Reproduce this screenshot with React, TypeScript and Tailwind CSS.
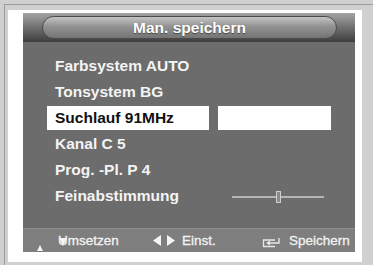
import React from "react";

const items = ["Farbsystem AUTO", "Tonsystem BG"];

export default function App() {
  const font = { fontFamily: '"Liberation Sans", Arial, sans-serif' };
  return (
    <div className="w-[373px] h-[265px] bg-[#d0d0d0] pt-[4px] pl-[4px] overflow-hidden" style={font}>
      <div className="h-full border-l border-t border-[#9c9c9c] pl-[3px] pt-[5px]">
        <div className="w-[354px] h-[252px] bg-white pl-[15px] pt-[3px]">
          <div className="w-[332px] h-[239px] bg-[#6c6c6c] flex flex-col">
            {/* header */}
            <div className="h-[29px] flex items-center pl-[19px] pr-[18px] bg-[linear-gradient(to_bottom,#a4a4a4_0%,#6a6a6a_55%,#3e3e3e_100%)]">
              <div className="flex-1 h-[23px] rounded-full border border-[#4a4a4a] bg-[linear-gradient(to_bottom,#c4c4c4_0%,#929292_45%,#747474_100%)] flex items-center justify-center">
                <span className="text-[15.5px] font-bold text-white leading-none [text-shadow:0_1px_1px_#444]">Man. speichern</span>
              </div>
            </div>
            {/* body */}
            <div className="flex-1 pt-[11px] flex flex-col">
              {items.map((t) => (
                <div key={t} className="h-[26px] flex items-center pl-[32px] text-[15.5px] font-bold text-[#f4f4f4]">
                  {t}
                </div>
              ))}
              <div className="h-[26px] flex items-center pl-[24px] gap-[9px]">
                <div className="w-[162px] h-[24px] bg-white flex items-center pl-[8px] text-[15.5px] font-bold text-[#111]">
                  Suchlauf 91MHz
                </div>
                <div className="w-[113px] h-[24px] bg-white" />
              </div>
              <div className="h-[26px] flex items-center pl-[32px] text-[15.5px] font-bold text-[#f4f4f4]">Kanal C 5</div>
              <div className="h-[26px] flex items-center pl-[32px] text-[15.5px] font-bold text-[#f4f4f4]">Prog. -Pl. P 4</div>
              <div className="h-[26px] flex items-center pl-[32px] text-[15.5px] font-bold text-[#f4f4f4]">
                <span className="w-[177px]">Feinabstimmung</span>
                <svg width="93" height="14" viewBox="0 0 93 14">
                  <line x1="0" y1="8" x2="92" y2="8" stroke="#b4b4b4" strokeWidth="2" />
                  <rect x="44.5" y="2.5" width="4" height="11" fill="#8a8a8a" stroke="#d0d0d0" strokeWidth="1" />
                </svg>
              </div>
            </div>
            {/* footer */}
            <div className="h-[24px] bg-[#7e7e7e] border-t border-[#8e8e8e] flex items-center pl-[14px] text-[13.5px] leading-none text-[#f2f2f2] [-webkit-text-stroke:0.3px_#f2f2f2]">
              <svg className="w-[21px] self-end mb-[1px]" width="21" height="6" viewBox="0 0 21 6">
                <polygon points="3,0 6,6 0,6" fill="#f4f4f4" />
              </svg>
              <span className="relative w-[95px]">
                Umsetzen
                <svg className="absolute left-0 top-[1px]" width="10" height="12" viewBox="0 0 10 12">
                  <polygon points="1,3 9,3 5,11" fill="#f4f4f4" />
                </svg>
              </span>
              <svg className="w-[29px]" width="29" height="11" viewBox="0 0 29 11">
                <polygon points="0,5.5 8,0 8,11" fill="#f4f4f4" />
                <polygon points="22,5.5 14,0 14,11" fill="#f4f4f4" />
              </svg>
              <span className="w-[80px]">Einst.</span>
              <svg className="w-[27px] mt-[2px]" width="27" height="12" viewBox="0 0 27 12">
                <path d="M13 4 H1.5 V10.5 H13" fill="none" stroke="#e8e8e8" strokeWidth="1.3" />
                <path d="M6 7 H17 V2" fill="none" stroke="#e8e8e8" strokeWidth="1.3" />
                <polygon points="4,7 8,4.5 8,9.5" fill="#e8e8e8" />
              </svg>
              <span>Speichern</span>
            </div>
          </div>
        </div>
      </div>
    </div>
  );
}
